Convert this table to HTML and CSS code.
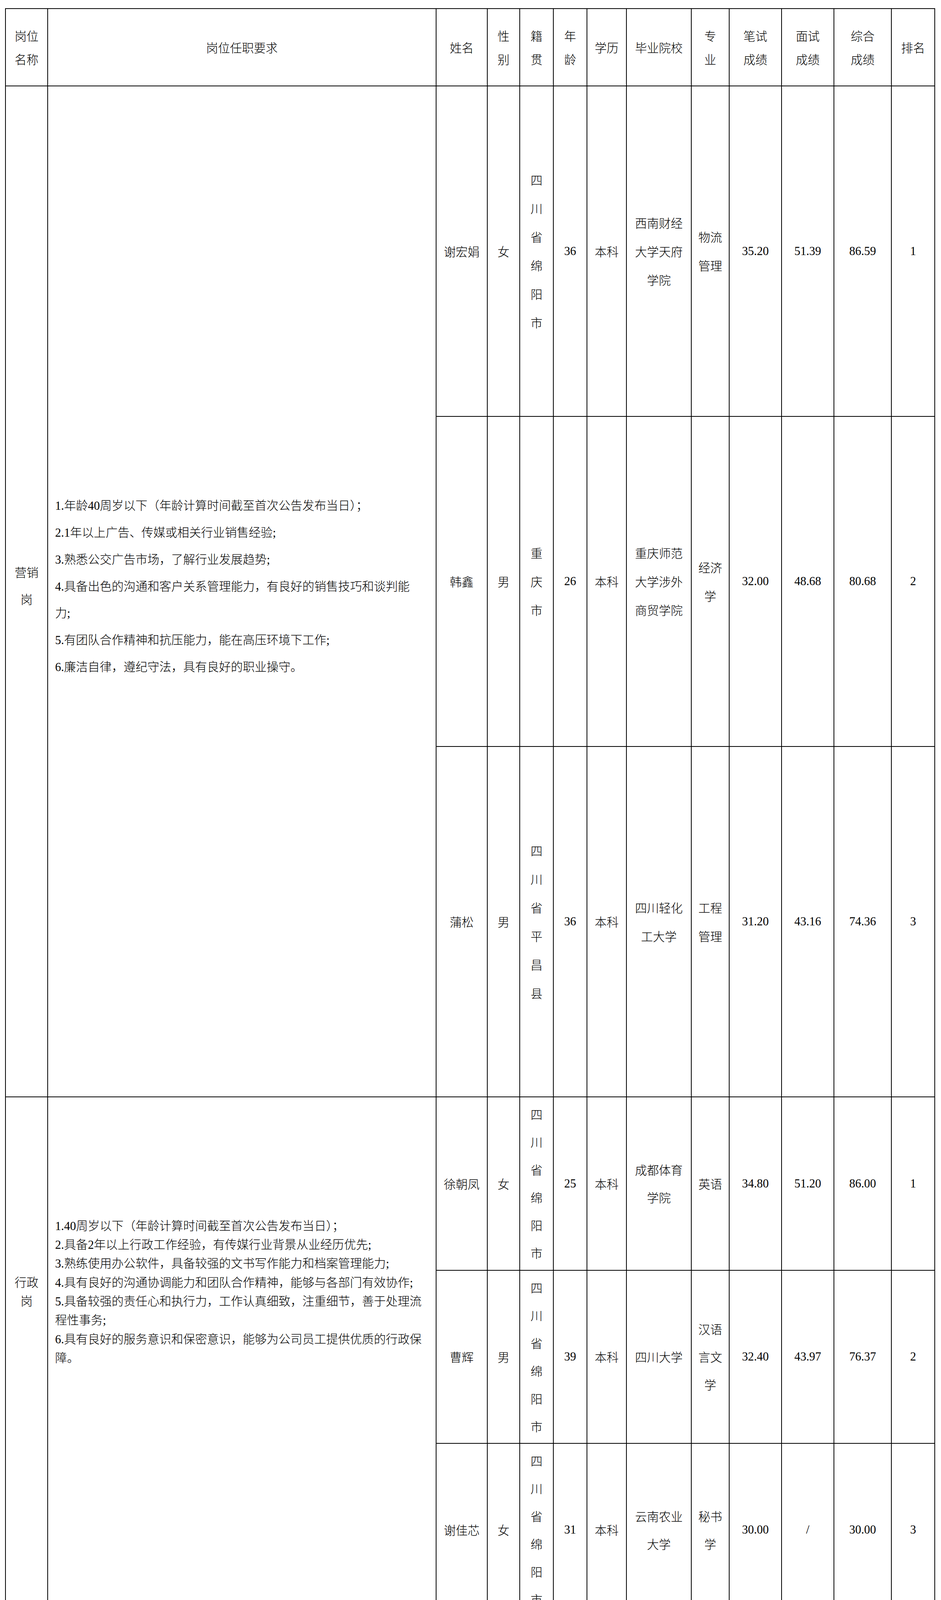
FILE: index.html
```html
<!DOCTYPE html>
<html lang="zh-CN">
<head>
<meta charset="utf-8">
<title>岗位任职要求及成绩</title>
<link rel="stylesheet" href="styles.css">
</head>
<body>
<table class="sheet">
  <colgroup>
    <col class="c-post">
    <col class="c-req">
    <col class="c-name">
    <col class="c-sex">
    <col class="c-home">
    <col class="c-age">
    <col class="c-edu">
    <col class="c-school">
    <col class="c-major">
    <col class="c-written">
    <col class="c-interview">
    <col class="c-total">
    <col class="c-rank">
  </colgroup>
  <thead>
    <tr class="head">
      <th>岗位<br>名称</th>
      <th>岗位任职要求</th>
      <th>姓名</th>
      <th>性<br>别</th>
      <th>籍<br>贯</th>
      <th>年<br>龄</th>
      <th>学历</th>
      <th>毕业院校</th>
      <th>专<br>业</th>
      <th>笔试<br>成绩</th>
      <th>面试<br>成绩</th>
      <th>综合<br>成绩</th>
      <th>排名</th>
    </tr>
  </thead>
  <tbody>
    <tr class="r1 g1">
      <td rowspan="3" class="post">营销<br>岗</td>
      <td rowspan="3" class="req">
        <p><span class="num">1.</span>年龄<span class="num">40</span>周岁以下（年龄计算时间截至首次公告发布当日）；</p>
        <p><span class="num">2.1</span>年以上广告、传媒或相关行业销售经验<span class="num">;</span></p>
        <p><span class="num">3.</span>熟悉公交广告市场，了解行业发展趋势<span class="num">;</span></p>
        <p><span class="num">4.</span>具备出色的沟通和客户关系管理能力，有良好的销售技巧和谈判能<br>力<span class="num">;</span></p>
        <p><span class="num">5.</span>有团队合作精神和抗压能力，能在高压环境下工作<span class="num">;</span></p>
        <p><span class="num">6.</span>廉洁自律，遵纪守法，具有良好的职业操守。</p>
      </td>
      <td>谢宏娟</td>
      <td>女</td>
      <td>四<br>川<br>省<br>绵<br>阳<br>市</td>
      <td class="num">36</td>
      <td>本科</td>
      <td>西南财经<br>大学天府<br>学院</td>
      <td>物流<br>管理</td>
      <td class="num">35.20</td>
      <td class="num">51.39</td>
      <td class="num">86.59</td>
      <td class="num">1</td>
    </tr>
    <tr class="r2">
      <td>韩鑫</td>
      <td>男</td>
      <td>重<br>庆<br>市</td>
      <td class="num">26</td>
      <td>本科</td>
      <td>重庆师范<br>大学涉外<br>商贸学院</td>
      <td>经济<br>学</td>
      <td class="num">32.00</td>
      <td class="num">48.68</td>
      <td class="num">80.68</td>
      <td class="num">2</td>
    </tr>
    <tr class="r3">
      <td>蒲松</td>
      <td>男</td>
      <td>四<br>川<br>省<br>平<br>昌<br>县</td>
      <td class="num">36</td>
      <td>本科</td>
      <td>四川轻化<br>工大学</td>
      <td>工程<br>管理</td>
      <td class="num">31.20</td>
      <td class="num">43.16</td>
      <td class="num">74.36</td>
      <td class="num">3</td>
    </tr>
    <tr class="r4 g2">
      <td rowspan="3" class="post">行政<br>岗</td>
      <td rowspan="3" class="req">
        <p><span class="num">1.40</span>周岁以下（年龄计算时间截至首次公告发布当日）；</p>
        <p><span class="num">2.</span>具备<span class="num">2</span>年以上行政工作经验，有传媒行业背景从业经历优先<span class="num">;</span></p>
        <p><span class="num">3.</span>熟练使用办公软件，具备较强的文书写作能力和档案管理能力<span class="num">;</span></p>
        <p><span class="num">4.</span>具有良好的沟通协调能力和团队合作精神，能够与各部门有效协作<span class="num">;</span></p>
        <p><span class="num">5.</span>具备较强的责任心和执行力，工作认真细致，注重细节，善于处理流<br>程性事务<span class="num">;</span></p>
        <p><span class="num">6.</span>具有良好的服务意识和保密意识，能够为公司员工提供优质的行政保<br>障。</p>
      </td>
      <td>徐朝凤</td>
      <td>女</td>
      <td>四<br>川<br>省<br>绵<br>阳<br>市</td>
      <td class="num">25</td>
      <td>本科</td>
      <td>成都体育<br>学院</td>
      <td>英语</td>
      <td class="num">34.80</td>
      <td class="num">51.20</td>
      <td class="num">86.00</td>
      <td class="num">1</td>
    </tr>
    <tr class="r5">
      <td>曹辉</td>
      <td>男</td>
      <td>四<br>川<br>省<br>绵<br>阳<br>市</td>
      <td class="num">39</td>
      <td>本科</td>
      <td>四川大学</td>
      <td>汉语<br>言文<br>学</td>
      <td class="num">32.40</td>
      <td class="num">43.97</td>
      <td class="num">76.37</td>
      <td class="num">2</td>
    </tr>
    <tr class="r6">
      <td>谢佳芯</td>
      <td>女</td>
      <td>四<br>川<br>省<br>绵<br>阳<br>市</td>
      <td class="num">31</td>
      <td>本科</td>
      <td>云南农业<br>大学</td>
      <td>秘书<br>学</td>
      <td class="num">30.00</td>
      <td class="num">/</td>
      <td class="num">30.00</td>
      <td class="num">3</td>
    </tr>
  </tbody>
</table>
</body>
</html>
```

FILE: styles.css
```css
html {
  overflow: hidden;
}

html, body {
  margin: 0;
  padding: 0;
  background: #ffffff;
}

body {
  color: #000000;
  font-family: "Noto Sans CJK SC", "Noto Sans", sans-serif;
  font-size: 30.5px;
  font-weight: 300;
}

.sheet {
  border-collapse: collapse;
  table-layout: fixed;
  width: 2378px;
  margin: 21px 0 0 13px;
}

.sheet th,
.sheet td {
  border: 2px solid #000000;
  padding: 0;
  text-align: center;
  vertical-align: middle;
  font-weight: 300;
  line-height: 73px;
}

.sheet td.num,
.sheet .num {
  font-family: "Liberation Serif", "Noto Sans CJK SC", serif;
  font-weight: 400;
}

.sheet td.req .num {
  line-height: 1;
}

.c-post { width: 108px; }
.c-req { width: 994px; }
.c-name { width: 131px; }
.c-sex { width: 83px; }
.c-home { width: 86px; }
.c-age { width: 86px; }
.c-edu { width: 101px; }
.c-school { width: 166px; }
.c-major { width: 97px; }
.c-written { width: 134px; }
.c-interview { width: 134px; }
.c-total { width: 147px; }
.c-rank { width: 111px; }

.sheet .head { height: 198px; }
.sheet .head th { line-height: 60px; }

.sheet .r1 { height: 846px; }
.sheet .r2 { height: 845px; }
.sheet .r3 { height: 897px; }
.sheet .r4 { height: 444px; }
.sheet .r5 { height: 443px; }
.sheet .r6 { height: 443px; }

.sheet .r4 td,
.sheet .r5 td,
.sheet .r6 td {
  line-height: 71px;
}

.sheet td.req {
  text-align: left;
  padding-left: 18px;
  padding-right: 8px;
}

.sheet td.req p {
  margin: 0;
  white-space: nowrap;
}

.sheet .g1 td.post,
.sheet .g1 td.req {
  line-height: 68.8px;
  padding-bottom: 30px;
}

.sheet .g2 td.post,
.sheet .g2 td.req {
  line-height: 48.3px;
  padding-bottom: 336px;
}
```
